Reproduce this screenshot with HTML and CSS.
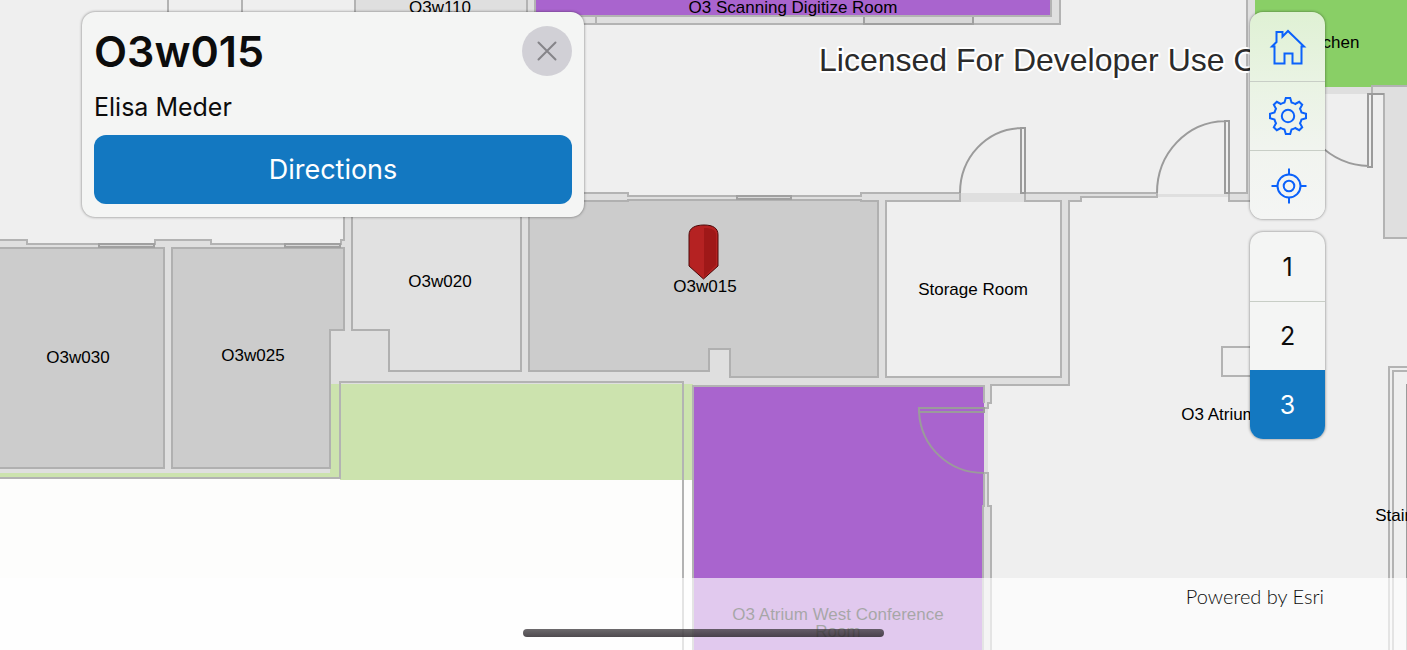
FILE: index.html
```html
<!DOCTYPE html>
<html lang="en">
<head>
<meta charset="utf-8">
<meta name="viewport" content="width=device-width, initial-scale=1">
<title>Indoor map – O3w015</title>
<link rel="stylesheet" href="styles.css">
</head>
<body>
<main class="app">
  <svg class="map" viewBox="0 0 1407 650" preserveAspectRatio="xMidYMid slice" role="img" aria-label="Floor plan, level 3">
    <!-- ground and building envelope -->
    <rect class="hall" width="1407" height="650"/>
    <path class="lawn" d="M0 470H330V383H693V480H0Z"/>
    <path class="outside" d="M0 479H340V480H693V650H0Z"/>
    <path class="wall" d="M0 240H27V244H155V240H211V244H341V240H344V193H628V196H861V193H1157V197H1081V201H1069V385H991V403H988V506H991V650H984V385H693V384H330V473H0Z"/>
    <path class="wall-line" d="M0 240H27V244H155V240H211V244H341V240H344V193H628V196H861V193H960V201M1025 201V193H1157V197H1081V201H1069V385H991V403H988V408H984M984 473H988V506H991V650"/>
    <path class="wall-line" d="M0 478H340V382H683V650"/>

    <!-- rooms along the top edge -->
    <path class="wall-line" d="M168 0V20M242 0V20"/>
    <path class="wall" d="M354 0H1060V24H354Z"/>
    <path class="wall-line" d="M355 0V24M527 0V24M584 24H1060V0M596 16V24"/>
    <rect class="fixture" x="864" y="16" width="109" height="8"/>
    <rect class="meeting edged" x="535" y="-8" width="516" height="24"/>

    <!-- offices -->
    <rect class="office" x="-4" y="248" width="168" height="220"/>
    <path class="office" d="M172 248H344V330H330V468H172Z"/>
    <path class="office pale" d="M352 201H521V371H389V330H352Z"/>
    <path class="office" d="M529 201H628V200H861V201H878V377H730V349H709V371H529Z"/>
    <rect class="storage" x="886" y="201" width="175" height="176"/>
    <rect class="wall" x="961" y="194" width="63" height="8"/>
    <path class="fixture" d="M99 244H154V247H99ZM285 244H340V247H285ZM737 196H791V199H737Z"/>

    <!-- conference room -->
    <rect class="meeting" x="694" y="386" width="290" height="264"/>
    <path class="wall-line" d="M693 650V386H984V403M984 473V506H983V650"/>
    <path class="door" d="M984 408H919V412H984ZM919 412C921 447 949 473 984 473"/>

    <!-- east side -->
    <path class="wall" d="M1247 0H1255V87H1373V94H1255V201H1229V193H1247Z"/>
    <rect class="wall" x="1158" y="194" width="71" height="3"/>
    <path class="wall-line" d="M1247 0V193H1229V201H1260"/>
    <rect class="kitchen" x="1255" y="-2" width="152" height="89"/>
    <path class="wall edged" d="M1372 86H1412V238H1384V94H1372Z"/>
    <path class="wall-line" d="M1252 347H1222V376H1252M1412 367H1389V650M1412 371H1393V650"/>
    <path class="door" d="M1407 384V650"/>

    <!-- swing doors -->
    <path class="door" d="M1021 193V128H1025V193ZM960 193C960 157 987 129 1021 128"/>
    <path class="door" d="M1225 193V121H1229V193ZM1157 193C1157 153 1187 122 1225 121"/>
    <path class="door" d="M1384 94H1368V167H1372V94M1369 166C1330 165 1299 134 1298 94"/>

    <g class="labels">
      <text x="440" y="13">O3w110</text>
      <text x="793" y="13">O3 Scanning Digitize Room</text>
      <text x="1331" y="48">Kitchen</text>
      <text x="78" y="363">O3w030</text>
      <text x="253" y="361">O3w025</text>
      <text x="440" y="287">O3w020</text>
      <text x="705" y="292">O3w015</text>
      <text x="973" y="295">Storage Room</text>
      <text x="1219" y="420">O3 Atrium</text>
      <text x="1397" y="521">Stairs</text>
      <text x="838" y="620">O3 Atrium West Conference</text>
      <text x="838" y="637">Room</text>
    </g>

    <path class="pin" d="M689 235C689 228 695 225 704 225S718 228 718 235V266L703.500 279L689 266Z"/>
    <path class="pin-shade" d="M704 228C712 228 716 230 716 235V265L704 277Z"/>
    <text class="watermark" x="819" y="71">Licensed For Developer Use Only</text>
  </svg>

  <div class="overlay">
    <section class="card panel" aria-labelledby="place">
      <header class="card-head">
        <h1 id="place">O3w015</h1>
        <button class="close" type="button" aria-label="Close">
          <svg viewBox="0 0 20 20" aria-hidden="true"><path d="M1.500 1.500L18.500 18.500M18.500 1.500L1.500 18.500"/></svg>
        </button>
      </header>
      <p class="person">Elisa Meder</p>
      <button class="directions" type="button">Directions</button>
    </section>

    <aside class="tools">
      <div class="stack panel tinted">
        <button type="button" aria-label="Home">
          <svg viewBox="0 0 40 40" aria-hidden="true"><path d="M6.500 36.500V19.500H4L8.500 15V5H14.500V9.500L20 4L36 19.500H33.500V36.500H24.500V26.500H16.500V36.500Z"/></svg>
        </button>
        <button type="button" aria-label="Settings">
          <svg viewBox="0 0 40 40" aria-hidden="true"><path d="M17.800 2H22.200L23.500 6.500Q25.500 7 27.200 8L31.200 5.800L34.200 8.800L32 12.800Q33 14.500 33.500 16.500L38 17.800V22.200L33.500 23.500Q33 25.500 32 27.200L34.200 31.200L31.200 34.200L27.200 32Q25.500 33 23.500 33.500L22.200 38H17.800L16.500 33.500Q14.500 33 12.800 32L8.800 34.200L5.800 31.200L8 27.200Q7 25.500 6.500 23.500L2 22.200V17.800L6.500 16.500Q7 14.500 8 12.800L5.800 8.800L8.800 5.800L12.800 8Q14.500 7 16.500 6.500Z"/><circle cx="20" cy="20" r="6.200"/></svg>
        </button>
        <button type="button" aria-label="My location">
          <svg viewBox="0 0 40 40" aria-hidden="true"><circle cx="21" cy="21" r="11.500"/><circle cx="21" cy="21" r="5.300"/><path d="M21 3.500V9.500M21 32.500V38.500M3.500 21H9.500M32.500 21H38.500"/></svg>
        </button>
      </div>
      <div class="stack panel" role="group" aria-label="Floor">
        <button type="button">1</button>
        <button type="button">2</button>
        <button class="active" type="button" aria-pressed="true">3</button>
      </div>
    </aside>
  </div>

  <footer class="attribution">
    <span>Powered by Esri</span>
    <div class="home-bar"></div>
  </footer>
</main>
</body>
</html>
```
FILE: styles.css
```css
* { box-sizing: border-box; }

body {
  margin: 0;
  font-family: Inter, "Liberation Sans", sans-serif;
  color: #0c0c0c;
}

.app {
  position: relative;
  display: flex;
  flex-direction: column;
  min-height: 100vh;
  overflow: hidden;
  background: #efefef;
}

/* Map canvas, beneath every control */
.map {
  position: absolute;
  inset: 0;
  width: 100%;
  height: 100%;
}

.hall { fill: #efefef; }
.lawn { fill: #cce3ae; }
.outside { fill: #fdfdfc; }
.wall { fill: #dfdfdf; }
.wall-line { fill: none; stroke: #b3b3b3; stroke-width: 2; }
.edged { stroke: #b3b3b3; stroke-width: 2; }
.fixture { fill: #d8d8d8; stroke: #a0a0a0; stroke-width: 2; }
.office { fill: #ccc; stroke: #b0b0b0; stroke-width: 2; }
.pale { fill: #e1e1e1; }
.storage { fill: #efefef; stroke: #b3b3b3; stroke-width: 2; }
.meeting { fill: #a964ce; }
.kitchen { fill: #89cf66; }
.door { fill: none; stroke: #9b9b9b; stroke-width: 2; }
.pin { fill: #b52222; stroke: #4c0808; stroke-width: 1; }
.pin-shade { fill: #9f1818; }

.labels {
  font-family: "Liberation Sans", Arial, sans-serif;
  font-size: 17px;
  text-anchor: middle;
  fill: #000;
}

.watermark {
  font-family: "Liberation Sans", Arial, sans-serif;
  font-size: 32px;
  fill: #2b2b2b;
  stroke: #fff;
  stroke-width: 4;
  stroke-linejoin: round;
  paint-order: stroke;
}

/* Floating controls */
.overlay {
  position: relative;
  flex: 1;
  display: flex;
  justify-content: space-between;
  align-items: flex-start;
  gap: 24px;
  padding: 12px 82px;
}

.panel {
  border-radius: 13px;
  background: #f4f5f4;
  box-shadow: 0 0 3px rgba(0, 0, 0, 0.5);
}

.tinted {
  background: linear-gradient(#dff1d4, #e9f3e3 33%, #f1f4ef 66%, #f4f5f4);
}

.card {
  width: 502px;
  padding: 13px 12px;
}

.card-head {
  display: flex;
  justify-content: space-between;
  align-items: center;
}

h1 {
  margin: 0;
  font-size: 43px;
  line-height: 52px;
  font-weight: 600;
}

.person {
  margin: 16px 0 14px;
  font-size: 25px;
  line-height: 28px;
}

button {
  padding: 0;
  border: 0;
  background: none;
  font: inherit;
  color: inherit;
  cursor: pointer;
}

.close {
  display: flex;
  align-items: center;
  justify-content: center;
  width: 50px;
  height: 50px;
  border-radius: 50%;
  background: #d1d0d6;
}

.close svg {
  width: 20px;
  height: 20px;
  stroke: #858489;
  stroke-width: 2;
  stroke-linecap: round;
}

.directions {
  width: 100%;
  height: 69px;
  border-radius: 12px;
  background: #1378c1;
  color: #fff;
  font-size: 27px;
}

.tools {
  display: flex;
  flex-direction: column;
  gap: 13px;
  width: 75px;
}

.stack {
  display: flex;
  flex-direction: column;
  overflow: hidden;
}

.stack button {
  display: flex;
  align-items: center;
  justify-content: center;
  height: 69px;
  font-size: 25px;
}

.stack button + button { border-top: 1px solid #c8cec6; }

.stack button.active {
  border-color: #1378c1;
  background: #1378c1;
  color: #fff;
}

.stack svg {
  width: 40px;
  height: 40px;
  fill: none;
  stroke: #0b62fb;
  stroke-width: 2;
}

.attribution {
  position: relative;
  display: flex;
  justify-content: flex-end;
  height: 72px;
  padding: 6px 83px;
  background: rgba(255, 255, 255, 0.65);
  font-family: Lato, "Open Sans", sans-serif;
  font-size: 20px;
  font-weight: 300;
  line-height: 24px;
}

.home-bar {
  position: absolute;
  left: 50%;
  bottom: 13px;
  width: 361px;
  height: 8px;
  margin-left: -181px;
  border-radius: 4px;
  background: linear-gradient(rgba(60, 56, 60, 0.75), rgba(35, 30, 35, 0.8));
}
```
